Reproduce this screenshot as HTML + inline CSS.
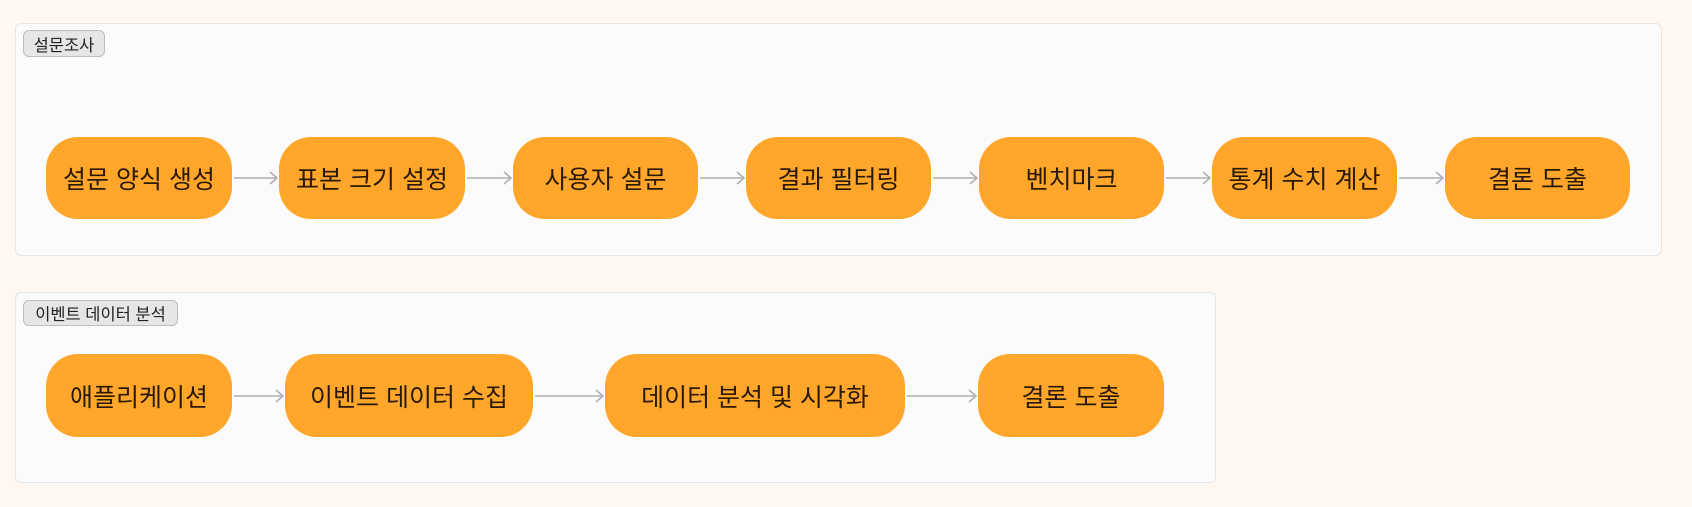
<!DOCTYPE html>
<html><head><meta charset="utf-8"><style>
body{margin:0;width:1692px;height:507px;background:#fff7f0;position:relative;overflow:hidden;font-family:"Liberation Sans","Noto Sans CJK KR",sans-serif;}
.c{position:absolute;background:#fbfbfb;border:1px solid #e6e6e6;border-radius:6px;box-sizing:border-box}
.l{position:absolute;background:#e6e6e6;border:1px solid #bdbdbd;border-radius:6px;font-size:16.5px;color:#222;box-sizing:border-box;display:flex;align-items:center;justify-content:center;white-space:nowrap}
.n{position:absolute;background:#ffa62b;border-radius:32px;display:flex;align-items:center;justify-content:center;font-size:25px;color:#2a1a05;white-space:nowrap}
svg{position:absolute;left:0;top:0}
</style></head><body>
<div class="c" style="left:15px;top:23px;width:1647px;height:233px"></div>
<div class="l" style="left:23px;top:30px;width:82px;height:27px">설문조사</div>
<div class="c" style="left:15px;top:292px;width:1201px;height:191px"></div>
<div class="l" style="left:23px;top:300px;width:155px;height:26px">이벤트 데이터 분석</div>
<svg width="1692" height="507" fill="none" stroke="#b0b0b0" stroke-width="1.6">
<path d="M234 178H277M270 172l7 6-7 6"/>
<path d="M467 178H511M504 172l7 6-7 6"/>
<path d="M700 178H744M737 172l7 6-7 6"/>
<path d="M933 178H977M970 172l7 6-7 6"/>
<path d="M1166 178H1210M1203 172l7 6-7 6"/>
<path d="M1399 178H1443M1436 172l7 6-7 6"/>
<path d="M234 396H283M276 390l7 6-7 6"/>
<path d="M535 396H603M596 390l7 6-7 6"/>
<path d="M907 396H976M969 390l7 6-7 6"/>
</svg>
<div class="n" style="left:46px;top:137px;width:186px;height:82px">설문 양식 생성</div>
<div class="n" style="left:279px;top:137px;width:186px;height:82px">표본 크기 설정</div>
<div class="n" style="left:513px;top:137px;width:185px;height:82px">사용자 설문</div>
<div class="n" style="left:746px;top:137px;width:185px;height:82px">결과 필터링</div>
<div class="n" style="left:979px;top:137px;width:185px;height:82px">벤치마크</div>
<div class="n" style="left:1212px;top:137px;width:185px;height:82px">통계 수치 계산</div>
<div class="n" style="left:1445px;top:137px;width:185px;height:82px">결론 도출</div>
<div class="n" style="left:46px;top:354px;width:186px;height:83px">애플리케이션</div>
<div class="n" style="left:285px;top:354px;width:248px;height:83px">이벤트 데이터 수집</div>
<div class="n" style="left:605px;top:354px;width:300px;height:83px">데이터 분석 및 시각화</div>
<div class="n" style="left:978px;top:354px;width:186px;height:83px">결론 도출</div>
</body></html>
